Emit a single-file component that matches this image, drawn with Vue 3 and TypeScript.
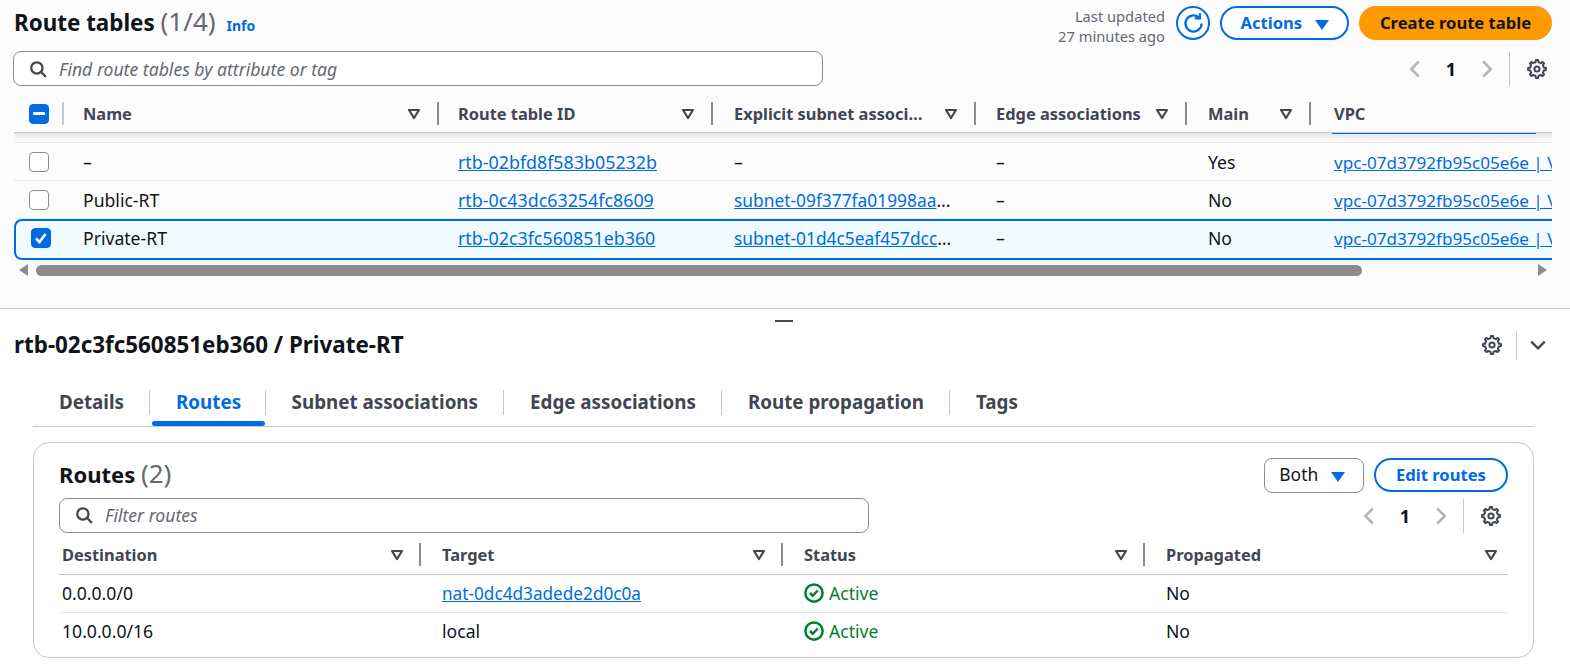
<template>
  <div class="page">
    <section class="top">
      <div class="head-row">
        <h1 class="title">Route tables <span class="count">(1/4)</span></h1>
        <a class="info">Info</a>
        <div class="head-actions">
          <div class="updated">Last updated<br />27 minutes ago</div>
          <button class="btn-refresh">
            <svg viewBox="0 0 20 20" width="23" height="23" fill="none" stroke="#006ce0" stroke-width="2">
              <path d="M17 10a7 7 0 1 1-2.4-5.3" />
              <path d="M15.6 1v4.6H11" />
            </svg>
          </button>
          <button class="btn btn-outline actions">Actions <i class="caret"></i></button>
          <button class="btn btn-primary">Create route table</button>
        </div>
      </div>

      <div class="filter-row">
        <div class="search top-search">
          <svg class="mag" viewBox="0 0 16 16" width="18" height="18" fill="none" stroke="#424650" stroke-width="2">
            <circle cx="7" cy="7" r="5" />
            <path d="M10.7 10.7 15 15" />
          </svg>
          <span class="placeholder">Find route tables by attribute or tag</span>
        </div>
        <div class="pager">
          <svg class="chev" viewBox="0 0 16 16" width="20" height="20"><path d="M11 2 5 8l6 6" /></svg>
          <span class="page-no">1</span>
          <svg class="chev" viewBox="0 0 16 16" width="20" height="20"><path d="m5 2 6 6-6 6" /></svg>
          <span class="pager-sep"></span>
          <svg class="gear" viewBox="0 0 20 20" width="20" height="20"><path :d="gearPath" /><circle cx="10" cy="10" r="2.6" /></svg>
        </div>
      </div>

      <div class="table-wrap">
        <div class="grid-row thead">
          <div class="th th-check">
            <span class="check on"><i class="dash"></i></span>
          </div>
          <div v-for="c in topCols" :key="c" class="th">
            <span class="th-text">{{ c }}</span>
            <svg v-if="c !== 'VPC'" class="sort" viewBox="0 0 14 12" width="14" height="12"><path d="M2 2h10L7 10z" /></svg>
          </div>
        </div>
        <div class="peek">
          <span class="peek-line"></span>
        </div>
        <div
          v-for="r in topRows"
          :key="r.id"
          class="grid-row tr"
          :class="{ selected: r.selected }"
        >
          <div class="td td-check">
            <span class="check" :class="{ on: r.selected }">
              <svg v-if="r.selected" viewBox="0 0 16 16" width="16" height="16" fill="none" stroke="#fff" stroke-width="2.6"><path d="m3 8.5 3.5 3.5 6-8" /></svg>
            </span>
          </div>
          <div class="td">{{ r.name }}</div>
          <div class="td"><a class="link id-link">{{ r.id }}</a></div>
          <div class="td subnet">
            <a v-if="r.subnet" class="link subnet-link">{{ r.subnet }}</a><span v-if="r.subnet">…</span>
            <template v-else>–</template>
          </div>
          <div class="td">–</div>
          <div class="td">{{ r.main }}</div>
          <div class="td"><a class="link vpc-link">vpc-07d3792fb95c05e6e | VPC</a></div>
        </div>
        <div class="scrollbar">
          <i class="arrow-left"></i>
          <div class="track"><div class="thumb"></div></div>
          <i class="arrow-right"></i>
        </div>
      </div>
    </section>

    <section class="bottom">
      <span class="handle"></span>
      <div class="detail-head">
        <h2 class="detail-title">rtb-02c3fc560851eb360 / Private-RT</h2>
        <div class="detail-tools">
          <svg class="gear" viewBox="0 0 20 20" width="20" height="20"><path :d="gearPath" /><circle cx="10" cy="10" r="2.6" /></svg>
          <span class="detail-sep"></span>
          <svg class="collapse" viewBox="0 0 16 16" width="18" height="18"><path d="m2 5 6 6 6-6" /></svg>
        </div>
      </div>

      <div class="tabs">
        <template v-for="(t, i) in tabs" :key="t">
          <span v-if="i > 0" class="tab-sep"></span>
          <a class="tab" :class="{ active: t === 'Routes' }">{{ t }}</a>
        </template>
      </div>

      <div class="card">
        <div class="card-head">
          <h3 class="card-title">Routes <span class="count">(2)</span></h3>
          <div class="card-actions">
            <button class="btn-select">Both <i class="caret"></i></button>
            <button class="btn btn-outline edit">Edit routes</button>
          </div>
        </div>
        <div class="filter-row card-filter">
          <div class="search card-search">
            <svg class="mag" viewBox="0 0 16 16" width="18" height="18" fill="none" stroke="#424650" stroke-width="2">
              <circle cx="7" cy="7" r="5" />
              <path d="M10.7 10.7 15 15" />
            </svg>
            <span class="placeholder">Filter routes</span>
          </div>
          <div class="pager card-pager">
            <svg class="chev" viewBox="0 0 16 16" width="20" height="20"><path d="M11 2 5 8l6 6" /></svg>
            <span class="page-no">1</span>
            <svg class="chev" viewBox="0 0 16 16" width="20" height="20"><path d="m5 2 6 6-6 6" /></svg>
            <span class="pager-sep"></span>
            <svg class="gear" viewBox="0 0 20 20" width="20" height="20"><path :d="gearPath" /><circle cx="10" cy="10" r="2.6" /></svg>
          </div>
        </div>
        <div class="routes">
          <div class="route-row route-head">
            <div v-for="c in routeCols" :key="c" class="rth">
              <span class="th-text">{{ c }}</span>
              <svg class="sort" viewBox="0 0 14 12" width="14" height="12"><path d="M2 2h10L7 10z" /></svg>
            </div>
          </div>
          <div v-for="r in routeRows" :key="r.dest" class="route-row route-body">
            <div class="rtd rtd-first">{{ r.dest }}</div>
            <div class="rtd">
              <a v-if="r.link" class="link nat-link">{{ r.target }}</a>
              <template v-else>{{ r.target }}</template>
            </div>
            <div class="rtd status">
              <svg viewBox="0 0 16 16" width="20" height="20" fill="none" stroke="#00802f" stroke-width="2">
                <circle cx="8" cy="8" r="6.9" />
                <path d="m4.8 8 2.2 2.2 4-4.2" />
              </svg>
              Active
            </div>
            <div class="rtd">No</div>
          </div>
        </div>
      </div>
    </section>
  </div>
</template>

<script setup lang="ts">
// 표 데이터
const topCols = ["Name", "Route table ID", "Explicit subnet associ…", "Edge associations", "Main", "VPC"];
const topRows = [
  { name: "–", id: "rtb-02bfd8f583b05232b", subnet: "", main: "Yes", selected: false },
  { name: "Public-RT", id: "rtb-0c43dc63254fc8609", subnet: "subnet-09f377fa01998aa", main: "No", selected: false },
  { name: "Private-RT", id: "rtb-02c3fc560851eb360", subnet: "subnet-01d4c5eaf457dcc", main: "No", selected: true }
];
const tabs = ["Details", "Routes", "Subnet associations", "Edge associations", "Route propagation", "Tags"];
const routeCols = ["Destination", "Target", "Status", "Propagated"];
const routeRows = [
  { dest: "0.0.0.0/0", target: "nat-0dc4d3adede2d0c0a", link: true },
  { dest: "10.0.0.0/16", target: "local", link: false }
];

// 톱니바퀴 외곽선 (이빨 8개)
const makeGear = (teeth: number, outer: number, inner: number): string => {
  const pts: string[] = [];
  const step = (Math.PI * 2) / teeth;
  for (let i = 0; i < teeth; i++) {
    const a = i * step - Math.PI / 2;
    const corners: [number, number][] = [
      [a - step * 0.27, inner],
      [a - step * 0.15, outer],
      [a + step * 0.15, outer],
      [a + step * 0.27, inner]
    ];
    corners.forEach(([ang, rad]) => {
      pts.push(`${(10 + Math.cos(ang) * rad).toFixed(2)} ${(10 + Math.sin(ang) * rad).toFixed(2)}`);
    });
  }
  return `M${pts.join("L")}Z`;
};
const gearPath = makeGear(8, 9, 7);
</script>

<style>
html,
body {
  background: #fff;
}
</style>

<style scoped>
.page {
  width: 1570px;
  height: 670px;
  overflow: hidden;
  font-family: "Noto Sans", "Open Sans", sans-serif;
  font-size: 17.6px;
  color: #0f141a;
}

.top {
  height: 309px;
  box-sizing: border-box;
  background: #fcfcfd;
  border-bottom: 1px solid #c6c6cd;
  padding: 6px 18px 0 14px;
}

.head-row {
  display: flex;
  align-items: flex-start;
  height: 34px;
}

.title {
  margin: -3px 0 0;
  font-size: 22.4px;
  line-height: 36px;
  font-weight: 700;
}

.count {
  font-size: 26px;
  font-weight: 400;
  color: #656871;
}

.info {
  margin: 10px 0 0 11px;
  font-size: 14px;
  font-weight: 700;
  color: #006ce0;
}

.head-actions {
  margin-left: auto;
  display: flex;
  align-items: flex-start;
}

.updated {
  font-size: 14.7px;
  line-height: 20px;
  color: #656871;
  text-align: right;
  margin-right: 11px;
}

.btn-refresh {
  width: 34px;
  height: 34px;
  padding: 0;
  margin-right: 10px;
  border: 2px solid #006ce0;
  border-radius: 50%;
  background: #fff;
  display: flex;
  align-items: center;
  justify-content: center;
}

.btn {
  height: 34px;
  box-sizing: border-box;
  border-radius: 17px;
  font-family: inherit;
  font-size: 16.6px;
  font-weight: 700;
  padding: 0 0 2px;
}

.btn-outline {
  border: 2px solid #006ce0;
  background: #fff;
  color: #006ce0;
}

.actions {
  width: 129px;
  margin-right: 10px;
}

.btn-primary {
  width: 193px;
  border: none;
  background: #ff9900;
  color: #0f141a;
}

.caret {
  display: inline-block;
  width: 0;
  height: 0;
  margin-left: 8px;
  border-left: 7px solid transparent;
  border-right: 7px solid transparent;
  border-top: 10px solid #006ce0;
  vertical-align: -1px;
}

.filter-row {
  display: flex;
  align-items: center;
  justify-content: space-between;
  margin-top: 11px;
}

.search {
  box-sizing: border-box;
  height: 35px;
  border: 1px solid #8c8c94;
  border-radius: 8px;
  background: #fff;
  display: flex;
  align-items: center;
  padding-left: 15px;
}

.top-search {
  width: 810px;
  margin-left: -1px;
}

.placeholder {
  margin-left: 12px;
  font-style: italic;
  color: #656871;
}

.pager {
  display: flex;
  align-items: center;
  height: 34px;
  margin-right: 5px;
}

.card-pager {
  margin-right: 7px;
}

.chev {
  fill: none;
  stroke: #b4b4bb;
  stroke-width: 2;
}

.page-no {
  width: 52px;
  text-align: center;
  font-weight: 700;
  font-size: 18px;
}

.pager-sep {
  width: 1px;
  height: 34px;
  margin: 0 17px 0 12px;
  background: #c6c6cd;
}

.gear {
  fill: none;
  stroke: #424650;
  stroke-width: 2;
  stroke-linejoin: round;
}

.table-wrap {
  width: 1538px;
  margin-top: 10px;
  position: relative;
  overflow: hidden;
}

.grid-row {
  display: grid;
  grid-template-columns: 48px 375px 274px 263px 211px 124px 243px;
}

.thead {
  height: 37px;
  border-bottom: 1px solid #c6c6cd;
  box-sizing: border-box;
  align-items: start;
}

.th {
  box-sizing: border-box;
  height: 23px;
  margin-top: 6px;
  padding: 0 16px 0 21px;
  display: flex;
  align-items: center;
  justify-content: space-between;
  border-right: 2px solid #8c8c94;
  margin-right: -2px;
  font-size: 16.4px;
  font-weight: 700;
  color: #424650;
}

.th:last-child {
  border-right: none;
}

.th:nth-child(4),
.td:nth-child(4) {
  padding-left: 23px;
}

.th:nth-child(5),
.td:nth-child(5) {
  padding-left: 22px;
}

.th:nth-child(6),
.td:nth-child(6) {
  padding-left: 23px;
}

.th:nth-child(7),
.td:nth-child(7) {
  padding-left: 25px;
}

.th-check {
  padding: 0 0 0 15px;
  border-right-color: #c6c6cd;
}

.th-text {
  white-space: nowrap;
}

.sort {
  flex: none;
  fill: none;
  stroke: #424650;
  stroke-width: 2.2;
  stroke-linejoin: round;
}

.peek {
  height: 10px;
  position: relative;
  border-bottom: 1px solid #e6e6e9;
  box-sizing: border-box;
  background: linear-gradient(#e6e6ea, #fcfcfd);
}

.peek-line {
  position: absolute;
  left: 1318px;
  top: 0;
  width: 204px;
  height: 1px;
  background: #006ce0;
}

.tr {
  height: 38px;
  box-sizing: border-box;
  border-bottom: 1px solid #e6e6e9;
  align-items: center;
}

.tr:last-of-type {
  border-bottom: none;
}

.selected {
  height: 41px;
  padding-bottom: 3px;
  background: #f0fbff;
  border: 2px solid #006ce0;
  border-right: none;
  border-radius: 8px 0 0 8px;
  margin-top: 0;
  grid-template-columns: 46px 375px 274px 263px 211px 124px 243px;
}

.td {
  padding-left: 21px;
  white-space: nowrap;
  overflow: hidden;
}

.td-check {
  padding-left: 15px;
  display: flex;
}

.check {
  width: 20px;
  height: 20px;
  box-sizing: border-box;
  border: 1px solid #8c8c94;
  border-radius: 4px;
  background: #fff;
  display: flex;
  align-items: center;
  justify-content: center;
}

.check.on {
  background: #006ce0;
  border-color: #006ce0;
}

.dash {
  width: 12px;
  height: 3px;
  border-radius: 1px;
  background: #fff;
}

.link {
  color: #006ce0;
  text-decoration: underline;
}

.id-link {
  font-size: 17.85px;
}

.subnet-link {
  font-size: 17.35px;
}

.vpc-link {
  font-size: 17.1px;
}

.nat-link {
  font-size: 17.2px;
}

.subnet {
  display: flex;
}

.scrollbar {
  display: flex;
  align-items: center;
  height: 12px;
  margin-top: 4px;
  padding: 0 5px 0 5px;
}

.arrow-left {
  border-right: 9px solid #8c8c8c;
  border-top: 6px solid transparent;
  border-bottom: 6px solid transparent;
}

.arrow-right {
  border-left: 9px solid #8c8c8c;
  border-top: 6px solid transparent;
  border-bottom: 6px solid transparent;
}

.track {
  flex: 1;
  padding: 0 9px 0 8px;
}

.thumb {
  width: 1326px;
  height: 11px;
  border-radius: 6px;
  background: #8c8c8c;
}

.bottom {
  position: relative;
  padding: 18px 36px 0 14px;
}

.handle {
  position: absolute;
  left: 775px;
  top: 11px;
  width: 18px;
  height: 2px;
  background: #424650;
}

.detail-head {
  display: flex;
  align-items: center;
  justify-content: space-between;
  height: 36px;
}

.detail-title {
  margin: 0;
  font-size: 22.4px;
  line-height: 36px;
  font-weight: 700;
}

.detail-tools {
  display: flex;
  align-items: center;
  margin-right: -13px;
}

.detail-sep {
  width: 1px;
  height: 29px;
  margin: 0 12px 0 14px;
  background: #c6c6cd;
}

.collapse {
  fill: none;
  stroke: #424650;
  stroke-width: 2;
}

.tabs {
  display: flex;
  align-items: flex-start;
  height: 47px;
  box-sizing: border-box;
  margin: 17px 0 0 19px;
  padding-top: 8px;
  width: 1501px;
  border-bottom: 1px solid #c6c6cd;
}

.tab {
  position: relative;
  display: block;
  height: 38px;
  line-height: 28px;
  padding: 0 25px 0 26px;
  font-size: 18.8px;
  font-weight: 700;
  color: #424650;
  white-space: nowrap;
}

.tab-sep {
  width: 1px;
  height: 25px;
  margin-top: 2px;
  background: #c6c6cd;
}

.tab.active {
  padding-right: 23.5px;
  color: #006ce0;
}

.tab.active::after {
  content: "";
  position: absolute;
  left: 2px;
  right: 0;
  bottom: 0;
  height: 5px;
  border-radius: 3px;
  background: #006ce0;
}

.card {
  box-sizing: border-box;
  width: 1501px;
  height: 216px;
  margin: 15px 0 0 19px;
  padding: 14px 25px 0;
  border: 1px solid #c6c6cd;
  border-radius: 16px;
  background: #fff;
}

.card-head {
  display: flex;
  justify-content: space-between;
  align-items: center;
  height: 36px;
}

.card-title {
  margin: 0 0 4px;
  font-size: 22px;
  font-weight: 700;
}

.card-actions {
  display: flex;
  align-items: center;
}

.btn-select {
  box-sizing: border-box;
  width: 100px;
  height: 35px;
  margin-right: 10px;
  border: 1px solid #8c8c94;
  border-radius: 8px;
  background: #fff;
  font-family: inherit;
  font-size: 17.4px;
  color: #0f141a;
  padding: 0 4px 2px 0;
}

.btn-select .caret {
  margin-left: 8px;
}

.edit {
  width: 134px;
}

.card-filter {
  margin-top: 5px;
  margin-bottom: 3px;
}

.card-search {
  width: 810px;
  padding-bottom: 2px;
}

.routes {
  width: 1449px;
}

.route-row {
  display: grid;
  grid-template-columns: 362px 362px 362px 363px;
}

.route-head {
  height: 39px;
  box-sizing: border-box;
  border-bottom: 1px solid #c6c6cd;
}

.rth {
  box-sizing: border-box;
  height: 23px;
  margin-top: 7px;
  padding: 0 15px 0 3px;
  display: flex;
  align-items: center;
  justify-content: space-between;
  border-right: 2px solid #8c8c94;
  font-size: 16.4px;
  font-weight: 700;
  color: #424650;
}

.rth + .rth {
  padding-left: 21px;
}

.rth:last-child {
  border-right: none;
  padding-right: 10px;
}

.route-body {
  height: 38px;
  box-sizing: border-box;
  padding-bottom: 2px;
  border-bottom: 1px solid #e6e6e9;
  align-items: center;
}

.route-body:last-child {
  border-bottom: none;
}

.rtd {
  padding-left: 21px;
}

.rtd-first {
  padding-left: 3px;
}

.status {
  display: flex;
  align-items: center;
  gap: 5px;
  color: #00802f;
}
</style>
